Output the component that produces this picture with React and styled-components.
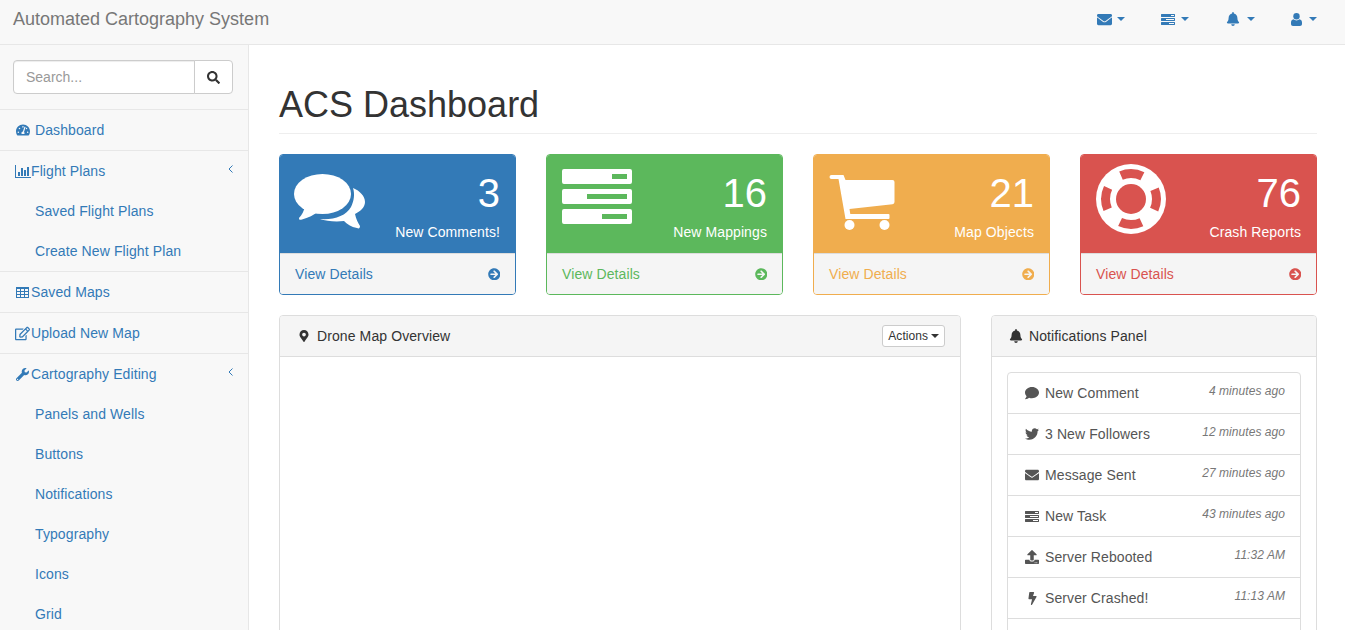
import React from "react";
import styled, { createGlobalStyle } from "styled-components";
import {
  FaArrowCircleRight,
  FaBell,
  FaBolt,
  FaComment,
  FaEnvelope,
  FaMapMarkerAlt,
  FaRegEdit,
  FaSearch,
  FaTachometerAlt,
  FaTwitter,
  FaUpload,
  FaWrench,
} from "react-icons/fa";

const GlobalStyle = createGlobalStyle`
  * { box-sizing: border-box; }
  body {
    margin: 0;
    font-family: "Liberation Sans", Arial, sans-serif;
    font-size: 14px;
    line-height: 20px;
    letter-spacing: 0.1px;
    color: #333;
    background: #fff;
  }
`;

// font awesome 4 shapes that the icon packages don't have
const TasksIcon = ({ size }) => (
  <svg width={size} height={(size * 55) / 70} viewBox="0 0 70 55" fill="currentColor">
    <path
      fillRule="evenodd"
      d="M2 0H68a2 2 0 0 1 2 2V13a2 2 0 0 1-2 2H2a2 2 0 0 1-2-2V2a2 2 0 0 1 2-2ZM50 5V10H65V5ZM2 20H68a2 2 0 0 1 2 2V33a2 2 0 0 1-2 2H2a2 2 0 0 1-2-2V22a2 2 0 0 1 2-2ZM25 25V30H65V25ZM2 40H68a2 2 0 0 1 2 2V53a2 2 0 0 1-2 2H2a2 2 0 0 1-2-2V42a2 2 0 0 1 2-2ZM40 45V50H65V45Z"
    />
  </svg>
);

const UserIcon = () => (
  <svg width="11" height="13" viewBox="0 0 11 13" fill="currentColor">
    <circle cx="5.5" cy="3.2" r="3.2" />
    <path d="M0 11V9.5C0 7.8 1 6.6 2.4 6.3 3.2 7 4.3 7.4 5.5 7.4S7.8 7 8.6 6.3C10 6.6 11 7.8 11 9.5V11C11 12.2 10.2 13 9 13H2C.8 13 0 12.2 0 11Z" />
  </svg>
);

const ChartIcon = () => (
  <svg width="16" height="13" viewBox="0 0 16 13" fill="currentColor">
    <path d="M0 0H1V12H16V13H0Z" />
    <path d="M3 7H5V11H3ZM6 3H8V11H6ZM9 5H11V11H9ZM12 2H14V11H12Z" />
  </svg>
);

const TableIcon = () => (
  <svg width="13" height="11" viewBox="0 0 13 11" fill="currentColor">
    <path
      fillRule="evenodd"
      d="M0 0H13V11H0ZM1 2V4H4V2ZM5 2V4H8V2ZM9 2V4H12V2ZM1 5V7H4V5ZM5 5V7H8V5ZM9 5V7H12V5ZM1 8V10H4V8ZM5 8V10H8V8ZM9 8V10H12V8Z"
    />
  </svg>
);

const AngleIcon = () => (
  <svg width="5" height="8" viewBox="0 0 5 8" fill="none" stroke="currentColor" strokeWidth="1">
    <path d="M4.500.5 1 4 4.500 7.500" />
  </svg>
);

const CommentsIcon = () => (
  <svg width="72" height="56" viewBox="0 0 72 56" fill="currentColor">
    <ellipse cx="28.5" cy="20" rx="28.5" ry="20" />
    <path d="M11 32C10 37 8 41 5 44 5 46 6 46 8 45.500 14 44 20 41 25 37Z" />
    <path d="M59 14C66 17 71 22 71 28 71 33 67 37 61 40 62 45 64 49 66 52 66 54 65 55 63 54 57 53 53 50 50 47 41 48 32 47 26 45 40 46 52 42 57 33 60 27 61 20 59 14Z" />
  </svg>
);

const CartIcon = () => (
  <svg width="66" height="55" viewBox="0 0 65 55" fill="currentColor">
    <path d="M2 0H14L16 5H63Q65 5 65 7V27Q65 29 63 29.300L20 34L20.800 39H59Q60 39 60 40V43Q60 44 59 44H16L9 4H2Q0 4 0 2T2 0Z" />
    <circle cx="20" cy="50" r="5" />
    <circle cx="55" cy="50" r="5" />
  </svg>
);

const RingIcon = ({ hole }) => (
  <svg width="70" height="70" viewBox="0 0 70 70">
    <circle cx="35" cy="35" r="35" fill="currentColor" />
    <circle
      cx="35"
      cy="35"
      r="25.500"
      fill="none"
      stroke={hole}
      strokeWidth="9"
      strokeDasharray="22 18.050"
      strokeDashoffset="11"
    />
    <circle cx="35" cy="35" r="15" fill={hole} />
  </svg>
);

const Page = styled.div`
  display: flex;
  flex-direction: column;
  height: 100vh;
  overflow: hidden;
`;

const TopBar = styled.nav`
  display: flex;
  flex: none;
  align-items: center;
  justify-content: space-between;
  height: 45px;
  padding: 0 9px 6px 13px;
  background: #f8f8f8;
  border-bottom: 1px solid #e7e7e7;
`;

const Brand = styled.a`
  font-size: 18px;
  letter-spacing: 0;
  color: #777;
`;

const TopLinks = styled.div`
  display: flex;
  gap: 5px;
`;

const TopLink = styled.a`
  display: flex;
  align-items: center;
  width: 60px;
  padding-left: ${(p) => p.$left || 15}px;
  color: #337ab7;
`;

const Caret = styled.span`
  width: 0;
  height: 0;
  margin-left: ${(p) => p.$gap}px;
  border-top: 4px solid currentColor;
  border-right: 4px solid transparent;
  border-left: 4px solid transparent;
`;

const Columns = styled.div`
  display: flex;
  flex: 1;
  min-height: 0;
`;

const Sidebar = styled.aside`
  flex: none;
  width: 249px;
  background: #f8f8f8;
  border-right: 1px solid #e7e7e7;
`;

const SearchBox = styled.div`
  display: flex;
  padding: 15px 15px 15px 13px;
  border-bottom: 1px solid #e7e7e7;
`;

const SearchInput = styled.input`
  flex: 1;
  min-width: 0;
  height: 34px;
  padding: 6px 12px;
  font: inherit;
  color: #555;
  background: #fff;
  border: 1px solid #ccc;
  border-radius: 4px 0 0 4px;
  box-shadow: inset 0 1px 1px rgba(0, 0, 0, 0.075);
  outline: none;
  &::placeholder {
    color: #999;
  }
`;

const SearchButton = styled.button`
  display: flex;
  align-items: center;
  justify-content: center;
  width: 39px;
  height: 34px;
  margin-left: -1px;
  color: #333;
  background: #fff;
  border: 1px solid #ccc;
  border-radius: 0 4px 4px 0;
`;

const NavGroup = styled.div`
  border-bottom: 1px solid #e7e7e7;
`;

const NavRow = styled.a`
  display: flex;
  align-items: center;
  height: 40px;
  padding: 0 15px 0 14px;
  color: #337ab7;
`;

const NavIcon = styled.span`
  display: flex;
  flex: none;
  align-items: center;
  justify-content: center;
  width: 17px;
  margin-right: ${(p) => p.$gap || 0}px;
`;

const Chevron = styled.span`
  display: flex;
  margin: -4px 0 0 auto;
`;

const SubRow = styled.a`
  display: flex;
  align-items: center;
  height: 40px;
  padding-left: 35px;
  color: #337ab7;
`;

const Main = styled.main`
  flex: 1;
  min-width: 0;
  padding: 0 28px 0 30px;
`;

const Title = styled.h1`
  margin: 40px 0 20px;
  padding-bottom: 9px;
  font-size: 36px;
  font-weight: 500;
  line-height: 39px;
  letter-spacing: 0;
  color: #333;
  border-bottom: 1px solid #eee;
`;

const Stats = styled.div`
  display: grid;
  grid-template-columns: repeat(4, 1fr);
  gap: 30px;
`;

const StatCard = styled.div`
  overflow: hidden;
  border: 1px solid ${(p) => p.$color};
  border-radius: 4px;
`;

const StatTop = styled.div`
  display: flex;
  justify-content: space-between;
  height: 98px;
  padding: 0 15px 0 ${(p) => p.$left}px;
  color: #fff;
  background: ${(p) => p.$color};
`;

const StatIcon = styled.div`
  margin-top: ${(p) => p.$top}px;
`;

const StatText = styled.div`
  padding-top: 14px;
  text-align: right;
`;

const StatNumber = styled.div`
  font-size: 40px;
  line-height: 48px;
  letter-spacing: 0;
`;

const StatLabel = styled.div`
  margin-top: 5px;
`;

const StatFooter = styled.a`
  display: flex;
  align-items: center;
  justify-content: space-between;
  height: 41px;
  padding: 0 15px;
  color: ${(p) => p.$color};
  background: #f5f5f5;
  border-top: 1px solid #ddd;
`;

const Lower = styled.div`
  display: grid;
  grid-template-columns: 682px 326px;
  gap: 30px;
  margin-top: 20px;
`;

const Panel = styled.section`
  height: 500px;
  background: #fff;
  border: 1px solid #ddd;
  border-radius: 4px;
`;

const PanelHead = styled.header`
  display: flex;
  align-items: center;
  height: 40px;
  box-sizing: content-box;
  padding: 0 15px;
  background: #f5f5f5;
  border-bottom: 1px solid #ddd;
  border-radius: 3px 3px 0 0;
`;

const PanelIcon = styled.span`
  display: flex;
  justify-content: center;
  width: 18px;
  margin-right: 4px;
  color: #333;
`;

const ActionsButton = styled.button`
  display: flex;
  align-items: center;
  height: 22px;
  margin-left: auto;
  padding: 0 5px;
  font: inherit;
  font-size: 12px;
  letter-spacing: 0.05px;
  color: #333;
  background: #fff;
  border: 1px solid #ccc;
  border-radius: 3px;
`;

const PanelBody = styled.div`
  padding: 15px;
`;

const FeedList = styled.div`
  border: 1px solid #ddd;
  border-radius: 4px;
`;

const FeedItem = styled.a`
  display: flex;
  justify-content: space-between;
  height: 41px;
  padding: 10px 15px;
  color: #555;
  &:first-child {
    height: 40px;
  }
  & + & {
    border-top: 1px solid #ddd;
  }
`;

const FeedName = styled.span`
  display: flex;
  align-items: center;
  height: 20px;
`;

const FeedIcon = styled.span`
  display: flex;
  justify-content: center;
  width: 18px;
  margin-right: 4px;
`;

const FeedTime = styled.em`
  margin-top: -2px;
  font-size: 12px;
  letter-spacing: 0.05px;
  color: #777;
`;

const stats = [
  { color: "#337ab7", left: 14, top: 19, icon: <CommentsIcon />, value: "3", label: "New Comments!" },
  { color: "#5cb85c", left: 15, top: 14, icon: <TasksIcon size={70} />, value: "16", label: "New Mappings" },
  { color: "#f0ad4e", left: 15, top: 20, icon: <CartIcon />, value: "21", label: "Map Objects" },
  { color: "#d9534f", left: 15, top: 9, icon: <RingIcon hole="#d9534f" />, value: "76", label: "Crash Reports" },
];

const feed = [
  { icon: <FaComment size={14} />, name: "New Comment", time: "4 minutes ago" },
  { icon: <FaTwitter size={14} />, name: "3 New Followers", time: "12 minutes ago" },
  { icon: <FaEnvelope size={14} />, name: "Message Sent", time: "27 minutes ago" },
  { icon: <TasksIcon size={14} />, name: "New Task", time: "43 minutes ago" },
  { icon: <FaUpload size={14} />, name: "Server Rebooted", time: "11:32 AM" },
  { icon: <FaBolt size={13} />, name: "Server Crashed!", time: "11:13 AM" },
  { icon: null, name: "", time: "" },
];

function App() {
  return (
    <Page>
      <GlobalStyle />
      <TopBar>
        <Brand>Automated Cartography System</Brand>
        <TopLinks>
          <TopLink $left={16}>
            <FaEnvelope size={15} />
            <Caret $gap={5} />
          </TopLink>
          <TopLink>
            <TasksIcon size={14} />
            <Caret $gap={6} />
          </TopLink>
          <TopLink>
            <FaBell size={14} />
            <Caret $gap={7} />
          </TopLink>
          <TopLink>
            <UserIcon />
            <Caret $gap={7} />
          </TopLink>
        </TopLinks>
      </TopBar>
      <Columns>
        <Sidebar>
          <SearchBox>
            <SearchInput placeholder="Search..." />
            <SearchButton>
              <FaSearch size={13} />
            </SearchButton>
          </SearchBox>
          <NavGroup>
            <NavRow>
              <NavIcon $gap={4}>
                <FaTachometerAlt size={14} />
              </NavIcon>
              Dashboard
            </NavRow>
          </NavGroup>
          <NavGroup>
            <NavRow>
              <NavIcon>
                <ChartIcon />
              </NavIcon>
              Flight Plans
              <Chevron>
                <AngleIcon />
              </Chevron>
            </NavRow>
            <SubRow>Saved Flight Plans</SubRow>
            <SubRow>Create New Flight Plan</SubRow>
          </NavGroup>
          <NavGroup>
            <NavRow>
              <NavIcon>
                <TableIcon />
              </NavIcon>
              Saved Maps
            </NavRow>
          </NavGroup>
          <NavGroup>
            <NavRow>
              <NavIcon>
                <FaRegEdit size={15} />
              </NavIcon>
              Upload New Map
            </NavRow>
          </NavGroup>
          <NavGroup>
            <NavRow>
              <NavIcon>
                <FaWrench size={13} />
              </NavIcon>
              Cartography Editing
              <Chevron>
                <AngleIcon />
              </Chevron>
            </NavRow>
            <SubRow>Panels and Wells</SubRow>
            <SubRow>Buttons</SubRow>
            <SubRow>Notifications</SubRow>
            <SubRow>Typography</SubRow>
            <SubRow>Icons</SubRow>
            <SubRow>Grid</SubRow>
          </NavGroup>
        </Sidebar>
        <Main>
          <Title>ACS Dashboard</Title>
          <Stats>
            {stats.map((stat) => (
              <StatCard key={stat.label} $color={stat.color}>
                <StatTop $color={stat.color} $left={stat.left}>
                  <StatIcon $top={stat.top}>{stat.icon}</StatIcon>
                  <StatText>
                    <StatNumber>{stat.value}</StatNumber>
                    <StatLabel>{stat.label}</StatLabel>
                  </StatText>
                </StatTop>
                <StatFooter $color={stat.color}>
                  View Details
                  <FaArrowCircleRight size={12.5} />
                </StatFooter>
              </StatCard>
            ))}
          </Stats>
          <Lower>
            <Panel>
              <PanelHead>
                <PanelIcon>
                  <FaMapMarkerAlt size={12} />
                </PanelIcon>
                Drone Map Overview
                <ActionsButton>
                  Actions
                  <Caret $gap={3} />
                </ActionsButton>
              </PanelHead>
            </Panel>
            <Panel>
              <PanelHead>
                <PanelIcon>
                  <FaBell size={14} />
                </PanelIcon>
                Notifications Panel
              </PanelHead>
              <PanelBody>
                <FeedList>
                  {feed.map((item, i) => (
                    <FeedItem key={i}>
                      <FeedName>
                        {item.icon && <FeedIcon>{item.icon}</FeedIcon>}
                        {item.name}
                      </FeedName>
                      <FeedTime>{item.time}</FeedTime>
                    </FeedItem>
                  ))}
                </FeedList>
              </PanelBody>
            </Panel>
          </Lower>
        </Main>
      </Columns>
    </Page>
  );
}

export default App;
